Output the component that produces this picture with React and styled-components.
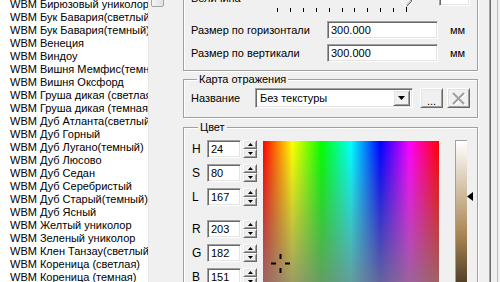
import styled, { createGlobalStyle } from 'styled-components';

const GlobalStyle = createGlobalStyle`
  body {
    margin: 0;
    background: #f0f0f0;
    overflow: hidden;
    font-family: "Liberation Sans", Arial, sans-serif;
    font-size: 11px;
    color: #000;
  }
`;

const Window = styled.div`
  display: flex;
  width: 500px;
  height: 282px;
  overflow: hidden;
  background: #f0f0f0;
`;

const ListBox = styled.div`
  display: flex;
  width: 165px;
  flex-shrink: 0;
  height: 100%;
`;

const Items = styled.div`
  width: 148px;
  height: 100%;
  overflow: hidden;
  background: #fff;
`;

const ItemList = styled.ul`
  list-style: none;
  margin: -2px 0 0;
  padding: 0 0 0 10px;
`;

const Item = styled.li`
  height: 13px;
  line-height: 13px;
  white-space: nowrap;
  font-size: 11px;
`;

const ScrollTrack = styled.div`
  width: 17px;
  height: 100%;
  background: #f0f0f0;
  border-left: 1px solid #e6e6e6;
  box-sizing: border-box;
`;

const Thumb = styled.div`
  margin: -20px 1px 0 2px;
  height: 25px;
  border: 1px solid #a3a3a3;
  border-radius: 2px;
  background: linear-gradient(to right, #f3f3f3, #e2e2e2);
`;

const Panel = styled.div`
  display: flex;
  flex-direction: column;
  padding-left: 18px;
  width: 295px;
  flex-shrink: 0;
`;

const Group = styled.fieldset`
  margin: ${p => p.$mt || 0}px 0 0;
  padding: ${p => p.$pad};
  border: 1px solid #a0a0a0;
  box-shadow: 1px 1px 0 #fff, inset 1px 1px 0 #fff;
  min-width: 0;
  min-inline-size: 0;
`;

const Legend = styled.legend`
  margin-left: 6px;
  padding: 0 2px;
  font-size: 11px;
  line-height: 13px;
  background: #f0f0f0;
  position: relative;
`;

const Column = styled.div`
  display: flex;
  flex-direction: column;
  gap: ${p => p.$gap || 0}px;
`;

const Row = styled.div`
  display: flex;
  align-items: ${p => p.$align || 'center'};
  height: ${p => p.$h || 18}px;
  margin-top: ${p => p.$mt || 0}px;
`;

const Label = styled.span`
  width: ${p => p.$w}px;
  flex-shrink: 0;
  font-size: ${p => p.$size || 11}px;
  line-height: 13px;
  margin-top: ${p => p.$mt || 0}px;
`;

const Sunken = styled.div`
  box-sizing: border-box;
  width: ${p => p.$w}px;
  height: ${p => p.$h || 18}px;
  flex-shrink: 0;
  background: #fff;
  border: 1px solid;
  border-color: #a0a0a0 #fff #fff #a0a0a0;
  box-shadow: inset 1px 1px 0 #696969, inset -1px -1px 0 #e3e3e3;
  display: flex;
  align-items: center;
  padding: 0 3px;
  font-size: 11px;
  white-space: nowrap;
  overflow: hidden;
`;

const Raised = styled.div`
  box-sizing: border-box;
  width: ${p => p.$w}px;
  height: ${p => p.$h}px;
  margin-left: ${p => p.$ml || 0}px;
  flex-shrink: 0;
  background: #f0f0f0;
  border: 1px solid;
  border-color: #fff #696969 #696969 #fff;
  box-shadow: inset 1px 1px 0 #e3e3e3, inset -1px -1px 0 #a0a0a0;
  display: flex;
  align-items: center;
  justify-content: center;
`;

const Unit = styled.span`
  margin-left: 12px;
  font-size: 11px;
`;

const SliderArea = styled.svg`
  display: block;
  flex-shrink: 0;
  margin-right: 19px;
`;

const Combo = styled(Sunken)`
  justify-content: space-between;
  padding: 0 2px 0 4px;
`;

const Dots = styled.span`
  font-size: 11px;
  line-height: 1;
  margin-top: 6px;
  letter-spacing: 0;
`;

const ColorArea = styled.div`
  display: flex;
  align-items: flex-start;
`;

const Field = styled.div`
  display: flex;
  align-items: center;
  height: 18px;
  margin-top: ${p => p.$mt || 0}px;
`;

const Spin = styled.div`
  display: flex;
  flex-direction: column;
  margin-left: 2px;
`;

const Spectrum = styled.div`
  position: relative;
  width: 176px;
  height: 184px;
  margin: 1px 0 0 6px;
  flex-shrink: 0;
  background:
    linear-gradient(to bottom, rgba(128, 128, 128, 0), rgba(128, 128, 128, 1)),
    linear-gradient(to right, #f00, #ff0, #0f0, #0ff, #00f, #f0f, #f00);
`;

const Cross = styled.svg`
  position: absolute;
  display: block;
`;

const LumWrap = styled.div`
  position: relative;
  margin-left: 16px;
  flex-shrink: 0;
`;

const LumBar = styled.div`
  box-sizing: border-box;
  width: 12px;
  height: 187px;
  border-left: 1px solid #a0a0a0;
  border-top: 1px solid #a0a0a0;
  background: linear-gradient(
    to bottom,
    #fff 0%,
    rgb(203, 182, 151) 30.4%,
    rgb(170, 134, 85) 50%,
    #000 100%
  );
`;

const Marker = styled.svg`
  position: absolute;
  left: 12px;
  display: block;
`;

const Splitter = styled.div`
  margin-left: 11px;
  width: 2px;
  height: 100%;
  border-left: 1px solid #a0a0a0;
  border-right: 1px solid #6d6d6d;
  box-sizing: border-box;
`;

const EdgeLine = styled.div`
  margin-left: 6px;
  width: 1px;
  height: 100%;
  background: #b8c0cc;
`;

const items = [
  'Бирюзовый униколор',
  'Бук Бавария(светлый)',
  'Бук Бавария(темный)',
  'Венеция',
  'Виндоу',
  'Вишня Мемфис(темный)',
  'Вишня Оксфорд',
  'Груша дикая (светлая)',
  'Груша дикая (темная)',
  'Дуб Атланта(светлый)',
  'Дуб Горный',
  'Дуб Лугано(темный)',
  'Дуб Люсово',
  'Дуб Седан',
  'Дуб Серебристый',
  'Дуб Старый(темный)',
  'Дуб Ясный',
  'Желтый униколор',
  'Зеленый униколор',
  'Клен Танзау(светлый)',
  'Кореница (светлая)',
  'Кореница (темная)',
];

const color = { h: 24, s: 80, l: 167, r: 203, g: 182, b: 151 };

function SpinButtons() {
  return (
    <Spin>
      <Raised $w={14} $h={9}>
        <svg width="5" height="3"><path d="M2.5 0 L5 3 L0 3 Z" fill="#000" /></svg>
      </Raised>
      <Raised $w={14} $h={9}>
        <svg width="5" height="3"><path d="M0 0 L5 0 L2.5 3 Z" fill="#000" /></svg>
      </Raised>
    </Spin>
  );
}

function ColorField({ name, value, mt }) {
  return (
    <Field $mt={mt}>
      <Label $w={15} $size={12}>{name}</Label>
      <Sunken $w={34}>{value}</Sunken>
      <SpinButtons />
    </Field>
  );
}

function Slider() {
  const ticks = [];
  for (let i = 0; i <= 10; i++) ticks.push(7 + i * 12.9);
  return (
    <SliderArea width="150" height="27">
      {ticks.map((x, i) => (
        <line
          key={i}
          x1={Math.round(x) + 0.5}
          x2={Math.round(x) + 0.5}
          y1={i === 10 ? 21 : 22}
          y2={26}
          stroke="#000"
        />
      ))}
      <path d="M131.5 0.5 L141.5 0.5 L141.5 15.5 L136.5 20.5 L131.5 15.5 Z" fill="#f0f0f0" stroke="#fff" />
      <path d="M141.5 0.5 L141.5 15.5 L136.5 20.5" fill="none" stroke="#696969" />
      <path d="M140.5 1 L140.5 15 L136.5 19" fill="none" stroke="#a0a0a0" />
    </SliderArea>
  );
}

export default function App() {
  const cursorX = (color.h / 240) * 176;
  const cursorY = (1 - color.s / 240) * 184;
  const markerY = ((240 - color.l) / 240) * 187;

  return (
    <>
      <GlobalStyle />
      <Window>
        <ListBox>
          <Items>
            <ItemList>
              {items.map(t => (
                <Item key={t}>WBM {t}</Item>
              ))}
            </ItemList>
          </Items>
          <ScrollTrack>
            <Thumb />
          </ScrollTrack>
        </ListBox>

        <Panel>
          <Group $mt={-30} $pad="15px 0 8px 7px">
            <Column>
              <Row $h={27} $align="flex-start">
                <Label $w={79} $mt={6}>Величина</Label>
                <Slider />
                <Sunken $w={31} $h={20}>100</Sunken>
              </Row>
              <Row $mt={8}>
                <Label $w={136}>Размер по горизонтали</Label>
                <Sunken $w={111}>300.000</Sunken>
                <Unit>мм</Unit>
              </Row>
              <Row $mt={5}>
                <Label $w={136}>Размер по вертикали</Label>
                <Sunken $w={111}>300.000</Sunken>
                <Unit>мм</Unit>
              </Row>
            </Column>
          </Group>

          <Group $mt={2} $pad="2px 0 9px 7px">
            <Legend>Карта отражения</Legend>
            <Row $h={20}>
              <Label $w={64}>Название</Label>
              <Combo $w={158} $h={20}>
                Без текстуры
                <Raised $w={17} $h={16}>
                  <svg width="7" height="4"><path d="M0 0 L7 0 L3.5 4 Z" fill="#000" /></svg>
                </Raised>
              </Combo>
              <Raised $w={23} $h={20} $ml={7}>
                <Dots>...</Dots>
              </Raised>
              <Raised $w={23} $h={20} $ml={4}>
                <svg width="15" height="14">
                  <path d="M2 2 L13 13 M13 2 L2 13" stroke="#fff" strokeWidth="2" transform="translate(1 1)" />
                  <path d="M2 2 L13 13 M13 2 L2 13" stroke="#a0a0a0" strokeWidth="2" />
                </svg>
              </Raised>
            </Row>
          </Group>

          <Group $mt={3} $pad="6px 0 0 8px">
            <Legend>Цвет</Legend>
            <ColorArea>
              <Column $gap={0}>
                <ColorField name="H" value={color.h} />
                <ColorField name="S" value={color.s} mt={6} />
                <ColorField name="L" value={color.l} mt={6} />
                <ColorField name="R" value={color.r} mt={14} />
                <ColorField name="G" value={color.g} mt={6} />
                <ColorField name="B" value={color.b} mt={6} />
              </Column>
              <Spectrum>
                <Cross
                  width="19"
                  height="19"
                  style={{ left: cursorX - 9.5, top: cursorY - 9.5 }}
                >
                  <rect x="8.5" y="0" width="2" height="5" fill="#000" />
                  <rect x="8.5" y="14" width="2" height="5" fill="#000" />
                  <rect x="0" y="8.5" width="5" height="2" fill="#000" />
                  <rect x="14" y="8.5" width="5" height="2" fill="#000" />
                </Cross>
              </Spectrum>
              <LumWrap>
                <LumBar />
                <Marker width="6" height="9" style={{ top: markerY - 4.5 }}>
                  <path d="M0 4.5 L6 0 L6 9 Z" fill="#000" />
                </Marker>
              </LumWrap>
            </ColorArea>
          </Group>
        </Panel>

        <Splitter />
        <EdgeLine />
      </Window>
    </>
  );
}
